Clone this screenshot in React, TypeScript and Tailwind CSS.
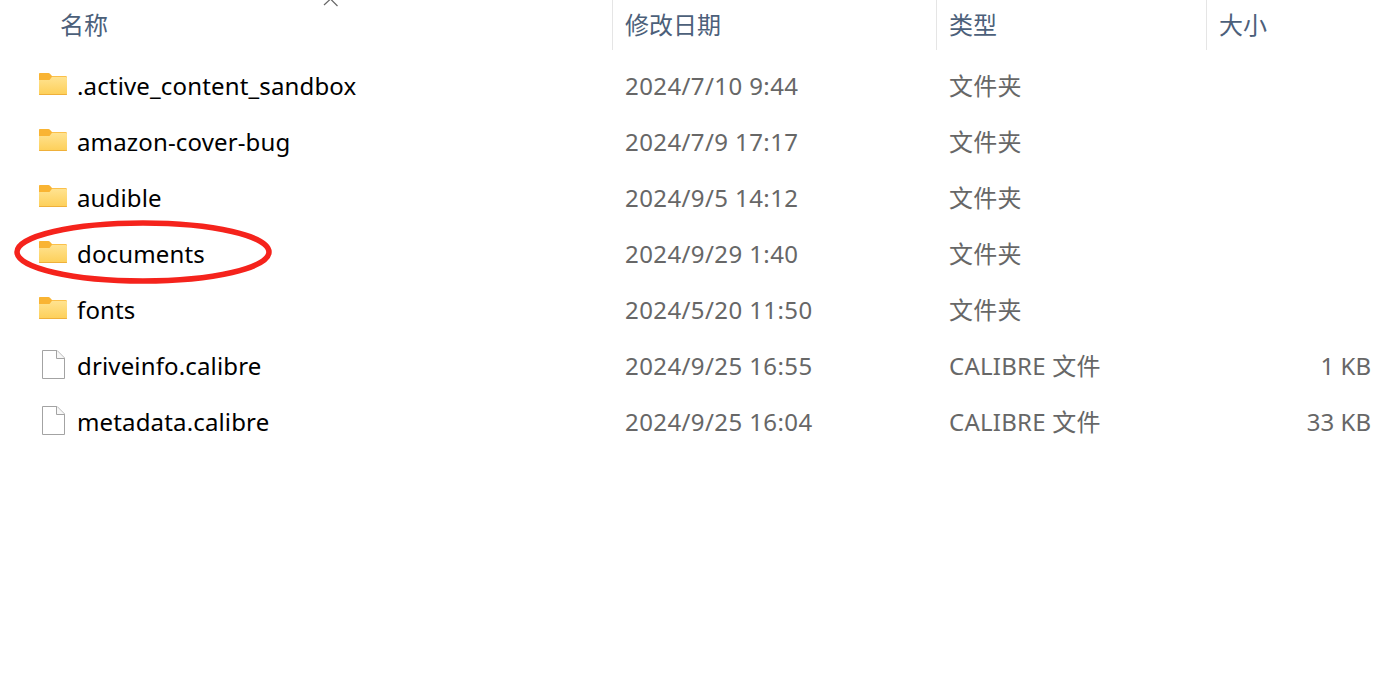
const columns = 'grid grid-cols-[612px_324px_270px_178px]'
const cjk = '"Noto Sans", "Noto Sans CJK SC", sans-serif'

const files = [
  { name: '.active_content_sandbox', date: '2024/7/10 9:44', type: '文件夹', size: '', folder: true },
  { name: 'amazon-cover-bug', date: '2024/7/9 17:17', type: '文件夹', size: '', folder: true },
  { name: 'audible', date: '2024/9/5 14:12', type: '文件夹', size: '', folder: true },
  { name: 'documents', date: '2024/9/29 1:40', type: '文件夹', size: '', folder: true },
  { name: 'fonts', date: '2024/5/20 11:50', type: '文件夹', size: '', folder: true },
  { name: 'driveinfo.calibre', date: '2024/9/25 16:55', type: 'CALIBRE 文件', size: '1 KB', folder: false },
  { name: 'metadata.calibre', date: '2024/9/25 16:04', type: 'CALIBRE 文件', size: '33 KB', folder: false },
]

function FolderIcon({ id }: { id: string }) {
  return (
    <svg width="28" height="24" viewBox="0 0 28 24" className="shrink-0">
      <defs>
        <linearGradient id={id} x1="0" y1="0" x2="0" y2="1">
          <stop offset="0" stopColor="#ffe391" />
          <stop offset="1" stopColor="#fdcf58" />
        </linearGradient>
      </defs>
      <path d="M0 2C0 1.400.5 1 1 1h8.500c.5 0 .9.2 1.200.5L13 4h13.500c.8 0 1.500.6 1.500 1.400V9H0z" fill="#f9b433" />
      <path d="M0 8h10.500l2.500-3.200h13.600c.8 0 1.400.6 1.400 1.400V22c0 .6-.5 1-1 1H1c-.6 0-1-.4-1-1z" fill={`url(#${id})`} />
      <path d="M0 22h28v.3c0 .4-.3.700-.7.700H.7c-.4 0-.7-.3-.7-.7z" fill="#efb03a" />
    </svg>
  )
}

function FileIcon() {
  return (
    <svg width="23" height="29" viewBox="0 0 23 29" className="shrink-0">
      <path d="M.5.500h14.500l7.500 7.500v20.500H.5z" fill="#fff" stroke="#a3a3a3" />
      <path d="M14.500.500v8h8" fill="#f7f7f7" stroke="#a3a3a3" />
    </svg>
  )
}

export default function App() {
  return (
    <div className="relative h-[694px] w-[1384px] overflow-hidden bg-white" style={{ fontFamily: cjk }}>
      {/* 表头 */}
      <div className={`${columns} relative h-12 text-[24px] text-[#4c607a]`}>
        <div className="pl-[60px] leading-[50px]">名称</div>
        <div className="border-l border-[#e5e5e5] pl-3 leading-[50px]">修改日期</div>
        <div className="border-l border-[#e5e5e5] pl-3 leading-[50px]">类型</div>
        <div className="border-l border-[#e5e5e5] pl-3 leading-[50px]">大小</div>
        {/* 排序箭头 */}
        <svg width="16" height="7" viewBox="0 0 16 7" className="absolute left-[323px] top-0">
          <path d="M1 5L7.500 -1L14.500 6" fill="none" stroke="#666" strokeWidth="1.200" />
        </svg>
      </div>

      {/* 文件列表 */}
      <div className="mt-2.5">
        {files.map((f, i) => (
          <div key={f.name} className={`${columns} h-14 items-center text-[24px]`}>
            <div className="flex items-center">
              <div className="ml-[39px] flex w-[38px] items-center">
                {f.folder ? (
                  <div className="-mt-1"><FolderIcon id={`folderFill${i}`} /></div>
                ) : (
                  <div className="-mt-[3px] ml-[3px]"><FileIcon /></div>
                )}
              </div>
              <span className="tracking-[0.15px] text-black">{f.name}</span>
            </div>
            <div className="pl-[13px] tracking-[0.4px] text-[#676767]">{f.date}</div>
            <div className="pl-[13px] tracking-[0.25px] text-[#676767]">{f.type}</div>
            <div className="pr-[13px] text-right text-[#676767]">{f.size}</div>
          </div>
        ))}
      </div>

      {/* 红色圈注 */}
      <svg width="270" height="74" viewBox="0 0 270 74" className="absolute left-[9px] top-[215px]">
        <ellipse cx="134" cy="37" rx="126" ry="29" fill="none" stroke="#f5231c" strokeWidth="5.500" />
      </svg>
    </div>
  )
}
